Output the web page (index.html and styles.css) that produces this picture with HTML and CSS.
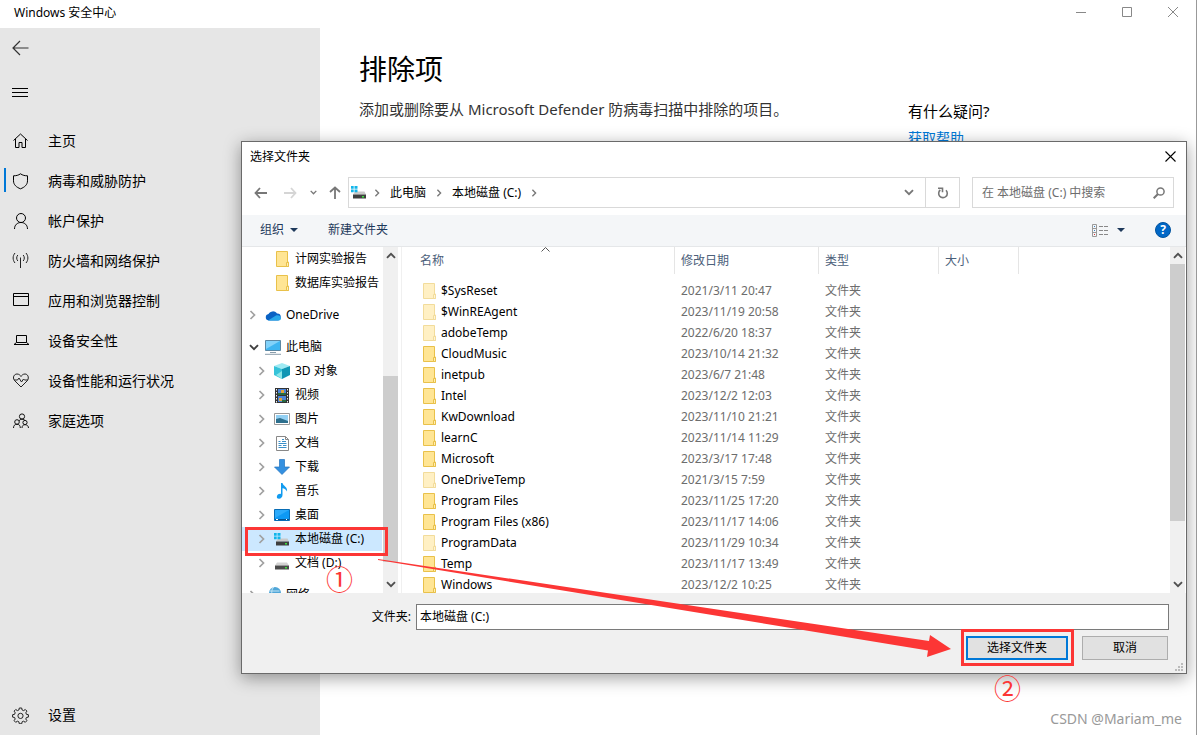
FILE: index.html
```html
<!DOCTYPE html>
<html lang="zh-CN">
<head>
<meta charset="utf-8">
<title>Windows 安全中心</title>
<link rel="stylesheet" href="styles.css">
</head>
<body>
<svg class="defs" aria-hidden="true">
  <symbol id="folder" viewBox="0 0 13 16"><path d="M.5.5h11v10.500l1 0v4.500H.5z" fill="#ffe594" stroke="#e9c14a"/><path d="M10.500 15.500v-4h2v4z" fill="#ffeeb5" stroke="#e9c14a"/></symbol>
  <symbol id="chev" viewBox="0 0 7 10"><path d="M1.500 1l4 4-4 4" fill="none" stroke="currentColor" stroke-width="1.700"/></symbol>
  <symbol id="chev-down" viewBox="0 0 10 7"><path d="M1 1.200l4 4 4-4" fill="none" stroke="currentColor" stroke-width="1.900"/></symbol>
  <symbol id="chev-up" viewBox="0 0 10 7"><path d="M1 5.800l4-4 4 4" fill="none" stroke="currentColor" stroke-width="1.900"/></symbol>
  <symbol id="tri" viewBox="0 0 8 4"><path d="M0 0h8L4 4z" fill="#1e395b"/></symbol>
  <symbol id="drive" viewBox="0 0 16 13"><path d="M3 5.500h10l2 3H1z" fill="#d3d3d3"/><path d="M1 8.500h14v4H1z" fill="#4a4a4a"/><path d="M11 10h2v1.500h-2z" fill="#3de03d"/></symbol>
  <symbol id="sysdrive" viewBox="0 0 16 13"><path d="M4 5.500h9.500l1.500 3H2z" fill="#c9c9c9"/><path d="M2 8.500h13v4H2z" fill="#3f3f3f"/><path d="M11 10h2v1.500h-2z" fill="#3de03d"/><path d="M0 0h2.700v2.700H0zM3.500 0H6.500v2.700h-3zM0 3.600h2.700v2.700H0zM3.500 3.600h3v2.700h-3z" fill="#12b5ea"/></symbol>
</svg>

<div class="window">
  <header class="titlebar">
    <span>Windows 安全中心</span>
    <div class="caption">
      <button aria-label="最小化"><svg width="10" height="10"><path d="M0 5.500h10" stroke="#888"/></svg></button>
      <button aria-label="最大化"><svg width="10" height="10"><path d="M.5.5h9v9h-9z" fill="none" stroke="#888"/></svg></button>
      <button aria-label="关闭"><svg width="10" height="10"><path d="M0 0l10 10M10 0L0 10" stroke="#888"/></svg></button>
    </div>
  </header>

  <div class="body">
    <aside class="sidebar">
      <button class="glyph" aria-label="返回"><svg width="17" height="16"><path d="M8 1L1 8l7 7M1 8h15.500" fill="none" stroke="#333" stroke-width="1.200"/></svg></button>
      <button class="glyph menu" aria-label="菜单"><svg width="16" height="10"><path d="M0 .5h16M0 4.500h16M0 8.500h16" stroke="#000"/></svg></button>
      <nav>
        <a href="#" class="item"><svg width="17" height="16" viewBox="0 0 17 16"><path d="M1.500 7.500l7-6.500 7 6.500M3.500 6v8.500h3.500v-5h3v5h3.500V6" fill="none" stroke="#000"/></svg>主页</a>
        <a href="#" class="item active"><svg width="17" height="17" viewBox="0 0 17 17"><path d="M8.500 .8C6.500 2.300 4 2.800 1.500 2.800v5c0 4 3 6.500 7 8 4-1.500 7-4 7-8v-5c-2.500 0-5-.5-7-2z" fill="none" stroke="#000"/></svg>病毒和威胁防护</a>
        <a href="#" class="item"><svg width="17" height="17" viewBox="0 0 17 17"><circle cx="9" cy="5" r="4.500" fill="none" stroke="#000"/><path d="M2.500 16c0-4 2.800-6.500 6.500-6.500s6.500 2.500 6.500 6.500" fill="none" stroke="#000"/></svg>帐户保护</a>
        <a href="#" class="item"><svg width="17" height="16" viewBox="0 0 17 16"><path d="M8.500 4.500V15M5.800 2c-1.500 2-1.500 4 0 6M11.200 2c1.500 2 1.500 4 0 6M3 0C.5 3 .5 7 3 10M14 0c2.500 3 2.500 7 0 10" fill="none" stroke="#222"/></svg>防火墙和网络保护</a>
        <a href="#" class="item"><svg width="17" height="16" viewBox="0 0 17 16"><path d="M1.500 .5h15v12h-15zM1.500 3.500h15" fill="none" stroke="#000"/></svg>应用和浏览器控制</a>
        <a href="#" class="item"><svg width="17" height="16" viewBox="0 0 17 16"><path d="M4.500 2.500h10v7h-10zM4.500 9.500l-2.500 2h15l-2.500-2" fill="none" stroke="#000"/></svg>设备安全性</a>
        <a href="#" class="item"><svg width="17" height="16" viewBox="0 0 17 16"><path d="M9 14L2.500 7.500C0 4 2.500 1 5 1c2 0 3.200 1.200 4 2.500C9.800 2.200 11 1 13 1c2.500 0 4.500 3 2.500 6.500zM2 7h3.500L7 5l2.500 4 2-3 1 1H16" fill="none" stroke="#222"/></svg>设备性能和运行状况</a>
        <a href="#" class="item"><svg width="17" height="16" viewBox="0 0 17 16"><g fill="none" stroke="#111"><circle cx="10" cy="3.500" r="2.600"/><circle cx="5" cy="9" r="2.300"/><circle cx="13" cy="9.500" r="2.100"/><path d="M1.500 15c0-2.500 1.300-3.700 3.500-3.700S8.300 12.500 8.300 15M10 15c0-2 1-3.300 3-3.300s3.500 1.300 3.500 3.300M7 8c.5-1 1.500-1.800 3-1.800s2.500.8 3 1.300"/></g></svg>家庭选项</a>
      </nav>
      <a href="#" class="item settings"><svg width="17" height="17" viewBox="0 0 17 17"><path d="M7.300 1h2.400l.4 2 1.500.6 1.700-1.100 1.600 1.600-1.100 1.700.6 1.500 2 .4v2.400l-2 .4-.6 1.500 1.100 1.700-1.600 1.600-1.700-1.100-1.500.6-.4 2H7.300l-.4-2-1.500-.6-1.700 1.100-1.600-1.600 1.100-1.700-.6-1.500-2-.4V7.700l2-.4.6-1.500-1.100-1.700 1.600-1.600 1.700 1.100L6.900 3z" fill="none" stroke="#222"/><circle cx="8.500" cy="8.900" r="2.600" fill="none" stroke="#222"/></svg>设置</a>
    </aside>

    <main class="content">
      <section class="intro">
        <h1>排除项</h1>
        <p>添加或删除要从 Microsoft Defender 防病毒扫描中排除的项目。</p>
      </section>
      <section class="help">
        <h2>有什么疑问?</h2>
        <a href="#">获取帮助</a>
      </section>
    </main>
  </div>

  <div class="dialog" role="dialog" aria-labelledby="dlg-title">
    <header class="dlg-title">
      <span id="dlg-title">选择文件夹</span>
      <button aria-label="关闭"><svg width="11" height="11"><path d="M.5.5l10 10M10.500.5l-10 10" stroke="#000" stroke-width="1.100"/></svg></button>
    </header>

    <div class="navbar">
      <div class="arrows">
        <button aria-label="后退"><svg width="13" height="12"><path d="M6 1L1.500 6 6 11M1.500 6H13" fill="none" stroke="#777" stroke-width="1.800"/></svg></button>
        <button aria-label="前进"><svg width="13" height="12"><path d="M7 1l4.500 5L7 11M11.500 6H0" fill="none" stroke="#d5d5d5" stroke-width="1.800"/></svg></button>
        <button class="recent" aria-label="最近位置"><svg width="7" height="5"><use href="#chev-down"/></svg></button>
        <button aria-label="上移"><svg width="12" height="13"><path d="M1 6l5-4.500L11 6M6 1.500V13" fill="none" stroke="#777" stroke-width="1.800"/></svg></button>
      </div>
      <div class="address">
        <svg width="16" height="13"><use href="#sysdrive"/></svg>
        <svg class="sep" width="6" height="8"><use href="#chev"/></svg>
        <button>此电脑</button>
        <svg class="sep" width="6" height="8"><use href="#chev"/></svg>
        <button>本地磁盘 (C:)</button>
        <svg class="sep" width="6" height="8"><use href="#chev"/></svg>
        <button class="drop" aria-label="历史"><svg width="10" height="7"><use href="#chev-down"/></svg></button>
        <button class="refresh" aria-label="刷新"><svg width="12" height="12"><path d="M3.300 3A4.300 4.300 0 1 0 9 3.300M1 1.300h4.500v4" fill="none" stroke="#777" stroke-width="1.600"/></svg></button>
      </div>
      <div class="search">
        <input type="text" aria-label="搜索" placeholder="在 本地磁盘 (C:) 中搜索">
        <svg width="12" height="12"><circle cx="7.500" cy="4.500" r="3.600" fill="none" stroke="#777" stroke-width="1.500"/><path d="M5 7L.7 11.300" stroke="#777" stroke-width="2"/></svg>
      </div>
    </div>

    <div class="toolbar">
      <button>组织 <svg width="8" height="4"><use href="#tri"/></svg></button>
      <button>新建文件夹</button>
      <div class="tools">
        <button aria-label="更改视图"><svg width="17" height="13"><path d="M.5.5h4v12h-4zM.5 4.500h4M.5 8.500h4" fill="none" stroke="#999"/><path d="M2 2h1v1H2zM2 6h1v1H2z" fill="#3a82c4"/><path d="M2 10h1v1H2z" fill="#d33"/><path d="M7 2.500h4M12 2.500h4M7 6.500h4M12 6.500h4M7 10.500h4M12 10.500h4" stroke="#888"/></svg></button>
        <button aria-label="更多选项"><svg width="8" height="4"><use href="#tri"/></svg></button>
        <button class="help-btn" aria-label="帮助">?</button>
      </div>
    </div>

    <div class="panes">
      <ul class="tree">
        <li class="child"><button><i></i><svg width="13" height="16"><use href="#folder"/></svg><span>计网实验报告</span></button></li>
        <li class="child"><button><i></i><svg width="13" height="16"><use href="#folder"/></svg><span>数据库实验报告</span></button></li>
        <li class="top"><button><i><svg width="7" height="10"><use href="#chev"/></svg></i><svg width="16" height="11" viewBox="0 0 16 11"><path d="M3.500 10.500a3.300 3.300 0 0 1 0-6.500A5 5 0 0 1 12 3.500a3.500 3.500 0 0 1 .5 7z" fill="#0a62c4"/><path d="M3 10.500l8-5c3-1 5 1 5 3a2.300 2.300 0 0 1-2.500 2z" fill="#28a8ea"/></svg><span>OneDrive</span></button></li>
        <li class="top"><button><i class="open"><svg width="10" height="7"><use href="#chev-down"/></svg></i><svg width="16" height="15" viewBox="0 0 16 15"><path d="M.5.5h15v10H.5z" fill="#3eb5f1" stroke="#5b87a3"/><path d="M1 1h14L1 9z" fill="#82d2fa"/><path d="M5 12.500h6M0 14.300h16" stroke="#8a9dab"/></svg><span>此电脑</span></button></li>
        <li class="child"><button><i><svg width="7" height="10"><use href="#chev"/></svg></i><svg width="16" height="16" viewBox="0 0 16 16"><path d="M0 3l8-3 8 3-8 3z" fill="#9feaf3"/><path d="M0 3l8 3v10l-8-4z" fill="#35c3d9"/><path d="M16 3L8 6v10l8-4z" fill="#0f96b4"/><path d="M2 12l6-4v8z" fill="#8be6e8"/></svg><span>3D 对象</span></button></li>
        <li class="child"><button><i><svg width="7" height="10"><use href="#chev"/></svg></i><svg width="14" height="15" viewBox="0 0 14 15"><path d="M0 0h14v15H0z" fill="#333"/><path d="M1.500 1v14M12.500 1v14" stroke="#eee" stroke-dasharray="1.500 1.500"/><path d="M3 1h8v6H3zM3 8h8v6H3z" fill="#4b84d8"/><path d="M6 2h3v3H6zM4 10h3v3H4z" fill="#e4a33a"/><path d="M3 5h8v2H3zM7 12h4v2H7z" fill="#276b43"/></svg><span>视频</span></button></li>
        <li class="child"><button><i><svg width="7" height="10"><use href="#chev"/></svg></i><svg width="16" height="12" viewBox="0 0 16 12"><path d="M.5.5h15v11H.5z" fill="#fff" stroke="#999"/><path d="M2 2h12v8H2z" fill="#93d0f3"/><path d="M2 6l4-1 8 3v2H2z" fill="#2d6f8d"/></svg><span>图片</span></button></li>
        <li class="child"><button><i><svg width="7" height="10"><use href="#chev"/></svg></i><svg width="13" height="15" viewBox="0 0 13 15"><path d="M.5.5h9l3 3v11H.5z" fill="#fff" stroke="#888"/><path d="M9.500.5v3h3" fill="none" stroke="#888"/><path d="M2.500 5.500h2M6 3.500h2M6 5.500h4M2.500 7.500h8M2.500 9.500h3M7 9.500h3.500M2.500 11.500h8" stroke="#3a8fc8"/></svg><span>文档</span></button></li>
        <li class="child"><button><i><svg width="7" height="10"><use href="#chev"/></svg></i><svg width="16" height="16" viewBox="0 0 16 16"><path d="M5.500.5h5V8h5L8 15.500.5 8h5z" fill="#3490e0" stroke="#2372bd" stroke-width=".7"/></svg><span>下载</span></button></li>
        <li class="child"><button><i><svg width="7" height="10"><use href="#chev"/></svg></i><svg width="12" height="16" viewBox="0 0 12 16"><path d="M5 0h1.500c.5 3 5.500 4 4.500 8.500-.8-2-2.500-3-4.500-3.200V12c0 2-1.500 3.700-3.500 3.700S.5 14.500 1 13c.5-1.700 2.500-2.500 4-2z" fill="#119bf0"/></svg><span>音乐</span></button></li>
        <li class="child"><button><i><svg width="7" height="10"><use href="#chev"/></svg></i><svg width="16" height="12" viewBox="0 0 16 12"><path d="M.5.5h15v11H.5z" fill="#0d99f4" stroke="#086db5"/><path d="M1 1h14L1 9z" fill="#2cabfb"/><path d="M1 10.500h14" stroke="#06508b"/><path d="M2 10.500h2M12 10.500h1" stroke="#fff"/></svg><span>桌面</span></button></li>
        <li class="child selected"><button><i><svg width="7" height="10"><use href="#chev"/></svg></i><svg width="16" height="13"><use href="#sysdrive"/></svg><span>本地磁盘 (C:)</span></button></li>
        <li class="child"><button><i><svg width="7" height="10"><use href="#chev"/></svg></i><svg width="16" height="13"><use href="#drive"/></svg><span>文档 (D:)</span></button></li>
        <li class="top"><button><i><svg width="7" height="10"><use href="#chev"/></svg></i><svg width="16" height="16" viewBox="0 0 16 16"><circle cx="10" cy="6" r="6" fill="#50a6d8"/><path d="M9 0c-3 2-3 8 0 12M4.500 4h10" fill="none" stroke="#c5e6f5"/><path d="M0 7h5v7H0z" fill="#b8cfdc"/></svg><span>网络</span></button></li>
      </ul>
      <div class="scroll scroll-tree">
        <button aria-label="向上"><svg width="10" height="7"><use href="#chev-up"/></svg></button>
        <span class="before"></span><span class="thumb"></span><span class="after"></span>
        <button aria-label="向下"><svg width="10" height="7"><use href="#chev-down"/></svg></button>
      </div>

      <div class="files">
        <table>
          <colgroup><col class="c-name"><col class="c-date"><col class="c-type"><col class="c-size"><col></colgroup>
          <thead><tr><th><div class="sorted">名称<svg width="9" height="5"><path d="M.5 4.500l4-4 4 4" fill="none" stroke="#555"/></svg></div></th><th><div>修改日期</div></th><th><div>类型</div></th><th><div>大小</div></th><th></th></tr></thead>
          <tbody>
            <tr class="dim"><td><svg width="13" height="16"><use href="#folder"/></svg>$SysReset</td><td>2021/3/11 20:47</td><td>文件夹</td><td></td><td></td></tr>
            <tr class="dim"><td><svg width="13" height="16"><use href="#folder"/></svg>$WinREAgent</td><td>2023/11/19 20:58</td><td>文件夹</td><td></td><td></td></tr>
            <tr class="dim"><td><svg width="13" height="16"><use href="#folder"/></svg>adobeTemp</td><td>2022/6/20 18:37</td><td>文件夹</td><td></td><td></td></tr>
            <tr><td><svg width="13" height="16"><use href="#folder"/></svg>CloudMusic</td><td>2023/10/14 21:32</td><td>文件夹</td><td></td><td></td></tr>
            <tr><td><svg width="13" height="16"><use href="#folder"/></svg>inetpub</td><td>2023/6/7 21:48</td><td>文件夹</td><td></td><td></td></tr>
            <tr><td><svg width="13" height="16"><use href="#folder"/></svg>Intel</td><td>2023/12/2 12:03</td><td>文件夹</td><td></td><td></td></tr>
            <tr><td><svg width="13" height="16"><use href="#folder"/></svg>KwDownload</td><td>2023/11/10 21:21</td><td>文件夹</td><td></td><td></td></tr>
            <tr><td><svg width="13" height="16"><use href="#folder"/></svg>learnC</td><td>2023/11/14 11:29</td><td>文件夹</td><td></td><td></td></tr>
            <tr><td><svg width="13" height="16"><use href="#folder"/></svg>Microsoft</td><td>2023/3/17 17:48</td><td>文件夹</td><td></td><td></td></tr>
            <tr class="dim"><td><svg width="13" height="16"><use href="#folder"/></svg>OneDriveTemp</td><td>2021/3/15 7:59</td><td>文件夹</td><td></td><td></td></tr>
            <tr><td><svg width="13" height="16"><use href="#folder"/></svg>Program Files</td><td>2023/11/25 17:20</td><td>文件夹</td><td></td><td></td></tr>
            <tr><td><svg width="13" height="16"><use href="#folder"/></svg>Program Files (x86)</td><td>2023/11/17 14:06</td><td>文件夹</td><td></td><td></td></tr>
            <tr class="dim"><td><svg width="13" height="16"><use href="#folder"/></svg>ProgramData</td><td>2023/11/29 10:34</td><td>文件夹</td><td></td><td></td></tr>
            <tr><td><svg width="13" height="16"><use href="#folder"/></svg>Temp</td><td>2023/11/17 13:49</td><td>文件夹</td><td></td><td></td></tr>
            <tr><td><svg width="13" height="16"><use href="#folder"/></svg>Windows</td><td>2023/12/2 10:25</td><td>文件夹</td><td></td><td></td></tr>
          </tbody>
        </table>
      </div>
      <div class="scroll scroll-files">
        <button aria-label="向上"><svg width="10" height="7"><use href="#chev-up"/></svg></button>
        <span class="thumb"></span><span class="after"></span>
        <button aria-label="向下"><svg width="10" height="7"><use href="#chev-down"/></svg></button>
      </div>
    </div>

    <footer class="dlg-footer">
      <div class="field">
        <label for="folder-name">文件夹:</label>
        <input id="folder-name" type="text" value="本地磁盘 (C:)">
      </div>
      <div class="actions">
        <button class="primary">选择文件夹</button>
        <button>取消</button>
      </div>
      <svg class="grip" width="8" height="8"><path d="M6 0h2v2H6zM3 3h2v2H3zM6 3h2v2H6zM0 6h2v2H0zM3 6h2v2H3zM6 6h2v2H6z" fill="#bbb"/></svg>
    </footer>
  </div>

  <div class="mark mark-tree"></div>
  <div class="mark mark-button"></div>
  <svg class="arrow" width="574" height="100" viewBox="378 558 574 100"><path d="M378 559L929 641l1-6 21 14-24 8 1-6.500L378 560z" fill="#fc3635"/></svg>
  <span class="step step-one">①</span>
  <span class="step step-two">②</span>
  <span class="watermark">CSDN @Mariam_me</span>
</div>
</body>
</html>
```
FILE: styles.css
```css
* { box-sizing: border-box; }
body { margin: 0; font: 12px/16px "Noto Sans", "Noto Sans CJK SC", sans-serif; color: #000; }
svg { display: block; flex: none; }
button { margin: 0; padding: 0; border: 0; background: none; font: inherit; color: inherit; }
input { font: inherit; color: inherit; }
.defs { position: absolute; width: 0; height: 0; }

.window { position: relative; display: flex; flex-direction: column; height: 100vh; overflow: hidden; background: #fff; border-right: 1px solid #999; }
.titlebar { display: flex; align-items: flex-start; justify-content: space-between; height: 28px; padding-left: 14px; flex: none; }
.titlebar span { line-height: 26px; }
.caption { display: flex; }
.caption button { display: grid; place-items: center; width: 46px; height: 24px; }

.body { display: flex; flex: 1; min-height: 0; }
.sidebar { display: flex; flex-direction: column; width: 320px; flex: none; background: #e6e6e6; font-size: 14px; }
.glyph { display: flex; align-items: center; height: 40px; padding-left: 12px; }
.menu { margin: 5px 0 8px; }
.item { position: relative; display: flex; align-items: center; gap: 19px; height: 40px; padding-left: 12px; color: #000; text-decoration: none; }
.item.active::before { content: ""; position: absolute; left: 4px; top: 7px; width: 2px; height: 24px; background: #0078d7; }
.settings { margin-top: auto; }

.content { display: flex; flex: 1; padding: 19px 0 0 39px; }
.intro { width: 549px; }
h1 { margin: 0 0 10px; font-size: 28px; line-height: 44px; font-weight: 400; }
.intro p { margin: 0; font-size: 15px; line-height: 16px; color: #333; }
.help { padding-top: 54px; }
h2 { margin: 0 0 9px; font-size: 15px; line-height: 20px; font-weight: 400; }
.help a { display: block; font-size: 14px; color: #0078d7; text-decoration: none; }

.dialog { position: absolute; left: 241px; right: 9px; top: 141px; bottom: 61px; display: flex; flex-direction: column; background: #fff; border: 1px solid #6a6a6a; box-shadow: 0 4px 16px rgba(0, 0, 0, .38); }
.dlg-title { display: flex; justify-content: space-between; align-items: center; height: 28px; padding: 0 10px 0 8px; flex: none; }
.dlg-title span { padding-top: 2px; }
.navbar { display: flex; height: 45px; padding: 7px 12px 7px 12px; flex: none; }
.arrows { display: flex; align-items: center; gap: 17px; width: 94px; }
.arrows .recent { margin: 0 -5px 0 -4px; }
.recent, .sep, .drop { color: #777; }
.address { display: flex; align-items: center; flex: 1; gap: 10px; padding-left: 2px; border: 1px solid #d9d9d9; }
.address > svg:first-child { margin-right: -3px; }
.drop { margin-left: auto; margin-right: 1px; }
.refresh { display: grid; place-items: center; width: 34px; height: 100%; border-left: 1px solid #d9d9d9; }
.search { display: flex; align-items: center; width: 202px; margin-left: 12px; padding: 0 8px 0 9px; border: 1px solid #d9d9d9; }
.search input { flex: 1; min-width: 0; border: 0; padding: 0; outline: 0; background: none; }
.search input::placeholder { color: #6d6d6d; opacity: 1; }

.toolbar { display: flex; align-items: center; gap: 30px; height: 32px; padding: 0 15px 1px 18px; flex: none; background: #f4f6f8; border-bottom: 1px solid #e5e7e9; color: #1e395b; }
.toolbar button { display: flex; align-items: center; gap: 6px; }
.tools { display: flex; align-items: center; gap: 8px; margin-left: auto; }
.toolbar .help-btn { justify-content: center; width: 16px; height: 16px; margin-left: 22px; border: 1px solid #00539f; border-radius: 50%; background: #0067c6; color: #fff; font-weight: 700; }

.panes { display: flex; flex: 1; min-height: 0; padding-right: 1px; overflow: hidden; }
.tree { width: 141px; margin: 0; padding: 0; list-style: none; flex: none; overflow: hidden; }
.tree button { display: grid; grid-template-columns: 11px 16px 1fr; align-items: center; justify-items: center; column-gap: 5px; width: 140px; height: 24px; padding-left: 16px; white-space: nowrap; }
.tree i { justify-self: start; color: #a0a0a0; }
.tree i.open { color: #404040; }
.tree span { justify-self: start; }
.tree .top { padding: 8px 0; }
.tree .top + .top { padding: 0; }
.tree .top button { padding-left: 7px; }
.tree .child + .top:last-child { padding-bottom: 0; }
.tree .selected button { background: #cce8ff; }

.scroll { display: flex; flex-direction: column; flex: none; background: #f0f0f0; color: #505050; }
.scroll button { display: grid; place-items: center; height: 17px; flex: none; }
.thumb { background: #cdcdcd; }
.scroll-tree { width: 15px; }
.scroll-tree .before { flex: 112; }
.scroll-tree .thumb { flex: 186; }
.scroll-tree .after { flex: 14; }
.scroll-files { width: 15px; }
.scroll-files .thumb { flex: 257; }
.scroll-files .after { flex: 55; }

.files { flex: 1; min-width: 0; margin-left: 3px; border-left: 1px solid #f0f0f0; overflow: hidden; }
table { width: 100%; table-layout: fixed; border-collapse: collapse; }
.c-name { width: 273px; }
.c-date { width: 144px; }
.c-type { width: 120px; }
.c-size { width: 80px; }
th { padding: 0 0 6px; font-weight: 400; text-align: left; color: #4c607a; }
th div { height: 27px; padding-left: 6px; line-height: 27px; border-right: 1px solid #e5e5e5; }
th .sorted { position: relative; padding-left: 18px; }
.sorted svg { position: absolute; left: 51%; top: 0; }
td { height: 21px; padding: 0 0 0 6px; color: #6d6d6d; white-space: nowrap; }
td:first-child { display: flex; align-items: center; gap: 5px; padding-left: 21px; color: #000; }
.dim svg { opacity: .55; }

.dlg-footer { position: relative; height: 80px; padding: 11px 17px 0 0; flex: none; background: #f0f0f0; }
.field { display: flex; align-items: center; }
.field label { width: 174px; padding-right: 5px; text-align: right; }
.field input { flex: 1; height: 26px; padding: 0 3px 2px; border: 1px solid #7a7a7a; background: #fff; }
.actions { display: flex; justify-content: flex-end; gap: 14px; margin-top: 6px; padding-right: 1px; }
.actions button { width: 86px; height: 24px; border: 1px solid #adadad; background: #e1e1e1; }
.actions .primary { width: 102px; border: 2px solid #0078d7; }
.grip { position: absolute; right: 3px; bottom: 2px; }

.mark { position: absolute; border: 3px solid #fc3635; }
.mark-tree { left: 245px; top: 527px; width: 143px; height: 29px; }
.mark-button { right: 122px; bottom: 69px; width: 113px; height: 37px; }
.arrow { position: absolute; left: 378px; top: 558px; }
.step { position: absolute; color: #fc3635; font: 27px/28px "Noto Sans CJK SC", sans-serif; }
.step-one { left: 326px; top: 565px; }
.step-two { left: 994px; top: 674px; }
.watermark { position: absolute; right: 14px; bottom: 6px; font-size: 14px; line-height: 20px; color: #999; }
```
